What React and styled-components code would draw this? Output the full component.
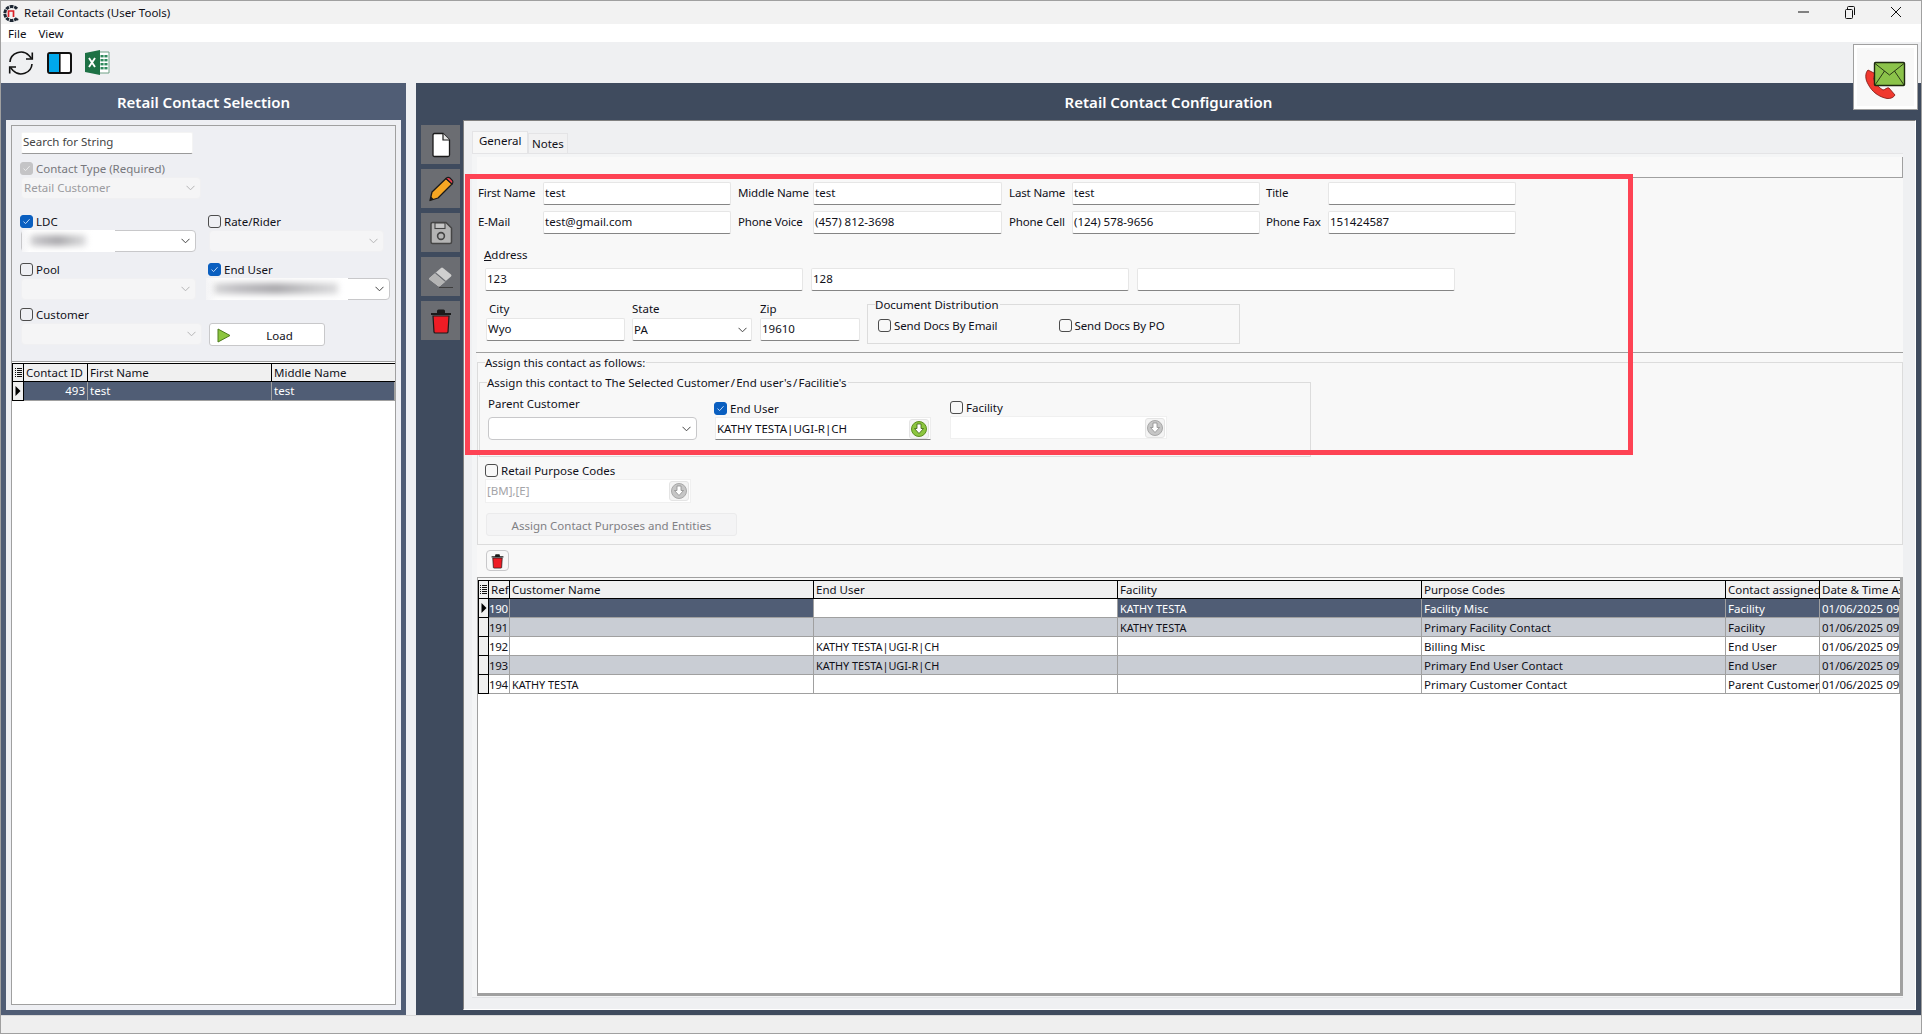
import React from 'react';
import styled, { createGlobalStyle } from 'styled-components';

const Global = createGlobalStyle`
  html, body { margin: 0; padding: 0; background: #eff0f2; }
  * { box-sizing: border-box; }
  #root { width: 1922px; height: 1034px; overflow: hidden; }
`;

const Window = styled.div`
  position: relative; width: 1922px; height: 1034px; display: flex; flex-direction: column;
  border: 1px solid #a0a0a0; background: #eff0f2; color: #101018;
  font: 11.5px/16px "Noto Sans", sans-serif; overflow: hidden;
`;
const TitleBar = styled.div`
  height: 23px; display: flex; align-items: center; padding: 1px 0 0 2px; background: #f2f2f2;
  font-size: 11.5px; gap: 5px;
`;
const TitleText = styled.span` flex: 1; `;
const WinControls = styled.div` display: flex; align-items: center; margin: -2px 19px 0 0; gap: 35px; `;
const MenuBar = styled.div`
  height: 18px; background: #fff; display: flex; align-items: center; gap: 12px; padding: 1px 0 0 7px; font-size: 11.5px;
`;
const Toolbar = styled.div`
  height: 41px; display: flex; align-items: center; padding-left: 7px; gap: 13px;
`;
const Panels = styled.div` flex: 1; display: flex; gap: 10px; min-height: 0; `;
const LeftPanel = styled.section`
  width: 405px; background: #505d75; display: flex; flex-direction: column; padding: 0 5px 5px;
`;
const RightPanel = styled.section`
  flex: 1; background: #3f4b5e; display: flex; flex-direction: column; padding: 0 5px 5px;
`;
const PanelTitle = styled.h2`
  height: 37px; margin: 0; color: #fff; font: 600 15px/39px "Noto Sans", sans-serif; text-align: center; flex: none;
`;
const LeftBody = styled.div`
  flex: 1; background: #eeeff3; padding: 5px; display: flex; min-height: 0;
`;
const LeftBox = styled.div`
  flex: 1; border: 1px solid #a0a0a0; display: flex; flex-direction: column; min-height: 0;
`;
const FilterForm = styled.div`
  height: 235px; padding: 6px 0 0 8px; flex: none;
`;
const Input = styled.div`
  height: ${p => p.$h || 23}px; width: ${p => (p.$w ? p.$w + 'px' : '100%')}; flex: none;
  background: #fff; border: 1px solid #e6e6e6; border-bottom: 1px solid #858585; border-radius: 2px;
  padding: 0 1px; line-height: ${p => (p.$h || 23) - 4}px; white-space: nowrap; overflow: hidden;
`;
const SearchInput = styled(Input)`
  margin-left: 1px; border-color: #f4f4f4; border-bottom-color: #9a9a9a; color: #444;
`;
const StateInput = styled(Input)`
  display: flex; align-items: center; padding-right: 4px;
`;
const CheckRow = styled.label`
  display: flex; align-items: center; gap: 3px; height: 13px; color: ${p => (p.$disabled ? '#77777c' : 'inherit')};
  margin-top: ${p => p.$mt || 0}px; margin-left: ${p => p.$ml || 0}px;
`;
const CheckBox = styled.span`
  width: 13px; height: 13px; border-radius: 3px; flex: none; display: flex; align-items: center; justify-content: center;
  border: 1px solid ${p => (p.$state === 'on' ? '#0a5fc0' : p.$state === 'off-dis' ? '#c4c4c6' : '#4d4d4d')};
  background: ${p => (p.$state === 'on' ? '#0a5fc0' : p.$state === 'off-dis' ? '#c4c4c6' : 'transparent')};
`;
const ComboBox = styled.div`
  position: relative; height: ${p => p.$h || 22}px; width: ${p => p.$w}px; margin-top: ${p => p.$mt ?? 2}px; margin-left: ${p => p.$ml || 0}px;
  background: ${p => (p.$disabled ? '#f5f5f6' : '#fff')}; border: 1px solid ${p => (p.$disabled ? '#f0f0f2' : '#c8c8ca')};
  border-radius: 4px; display: flex; align-items: center; padding: 0 5px 0 2px; color: ${p => (p.$disabled ? '#9b9b9f' : 'inherit')};
`;
const ComboText = styled.span` flex: 1; white-space: nowrap; `;
const ComboMask = styled.span`
  position: absolute; left: ${p => p.$l}px; top: -1px; bottom: -1px; width: ${p => p.$w}px; background: linear-gradient(90deg, #f4f4f6, #fff 8%); overflow: hidden;
`;
const BlurredValue = styled.span`
  position: absolute; left: ${p => p.$l}px; top: 5px; height: 11px; width: ${p => p.$w}px;
  background: linear-gradient(90deg, #d4d4d6, #bdbcc0 20%, #a9a8ac 50%, #c4c4c6 75%, #dcdcde 100%);
  filter: blur(3px);
`;
const FieldsRow = styled.div`
  display: grid; grid-template-columns: 188px 1fr; margin-top: ${p => p.$mt}px;
`;
const Field = styled.div` min-width: 0; `;
const LoadButton = styled.button`
  width: 116px; height: 23px; margin: 15px 0 0 1px; background: #fff; border: 1px solid #c8c8ca; border-radius: 3px;
  display: flex; align-items: center; padding: 2px 0 0 7px; font: inherit; color: inherit;
`;
const LoadLabel = styled.span` flex: 1; text-align: center; padding-left: 4px; `;

const GridWrap = styled.div`
  flex: 1; background: #fff; min-height: 0; display: flex; flex-direction: column;
`;
const LeftGridWrap = styled(GridWrap)` border-top: 1px solid #a0a0a0; padding-top: 1px; `;
const GridRow = styled.div`
  display: grid; grid-template-columns: ${p => p.$cols}; height: 19px; flex: none;
`;
const HeaderCell = styled.div`
  background: #f0f0f0; border-top: 1px solid #000; border-bottom: 1px solid #000; border-right: 1px solid #000;
  padding: 0 0 0 2px; line-height: 17px; white-space: nowrap; overflow: hidden; display: flex; align-items: center;
  &:last-child { border-right: none; }
`;
const RowHead = styled.div`
  background: #f0f0f0; border-bottom: 1px solid #000; border-right: 1px solid #000; border-left: 1px solid #000;
  border-top: ${p => (p.$top ? '1px solid #000' : 'none')};
  display: flex; align-items: center; justify-content: center;
`;
const Cell = styled.div`
  background: ${p => p.$bg}; color: ${p => p.$fg}; text-align: ${p => (p.$right ? 'right' : 'left')};
  border-bottom: 1px solid #a0a0a0; border-right: 1px solid #a0a0a0; padding: 0 ${p => (p.$tight ? 0 : 2)}px;
  line-height: 18px; white-space: nowrap; overflow: hidden;
  font-size: ${p => (p.$caps ? '10.9px' : 'inherit')}; letter-spacing: ${p => (p.$tight ? '-0.3px' : 'normal')};
`;
const RightGridWrap = styled(GridWrap)`
  margin-top: 6px; border-top: 1px solid #a0a0a0; border-left: 1px solid #a0a0a0; border-right: 3px solid #a0a0a0; border-bottom: 3px solid #a0a0a0;
  padding-top: 2px; background: linear-gradient(#f8f8f8 2px, #fff 2px);
  ${Cell} { line-height: 20px; }
`;
const Sidebar = styled.div`
  width: 42px; flex: none; display: flex; flex-direction: column; gap: 5px; padding-top: 5px;
`;
const SideButton = styled.div`
  width: 39px; height: 39px; background: #6b6d72; display: flex; align-items: center; justify-content: center;
`;
const RightBody = styled.div` flex: 1; display: flex; min-height: 0; `;
const Main = styled.div`
  flex: 1; display: flex; flex-direction: column; min-width: 0;
  border: 1px solid; border-color: #808080 #fff #fff #808080; padding: 10px 12px 11px 8px; background: #eff0f2;
`;
const Tabs = styled.div` height: 22px; display: flex; align-items: flex-end; flex: none; `;
const Tab = styled.div`
  height: ${p => (p.$active ? 22 : 20)}px; width: ${p => p.$w}px; padding-left: ${p => (p.$active ? 6 : 3)}px; background: ${p => (p.$active ? '#f7f7f7' : '#f1f1f2')};
  border: 1px solid #e4e4e6; border-bottom: none; line-height: ${p => (p.$active ? 18 : 19)}px;
`;
const TabPage = styled.div`
  flex: 1; min-height: 0; display: flex; flex-direction: column; border-top: 1px solid #e4e4e6; border-bottom: 1px solid #e2e3e6;
  padding: 3px 0 1px 5px; background: #f4f5f6;
`;
const TopStrip = styled.div`
  height: 21px; flex: none; background: #f9f9f9; border-right: 1px solid #a0a0a0; border-bottom: 1px solid #a0a0a0;
`;
const PageBody = styled.div` flex: 1; min-height: 0; display: flex; flex-direction: column; background: #f8f8f8; `;
const ContactGrid = styled.div`
  display: grid; grid-template-columns: 66px 188px 82px 189px 70px 188px 68px 188px; row-gap: 6px; padding-top: 4px; align-items: center;
`;
const FormLabel = styled.span`
  padding-left: ${p => p.$pl || 0}px; margin-bottom: 2px; white-space: nowrap; letter-spacing: -0.15px;
`;
const AddressLabel = styled.div` margin: 13px 0 0 7px; height: 16px; `;
const Under = styled.u` text-decoration-thickness: 1px; `;
const AddressRow = styled.div` display: flex; gap: 8px; margin: 5px 0 0 8px; `;
const CityRow = styled.div` display: flex; margin: 10px 0 0 9px; align-items: flex-start; `;
const StackField = styled.div`
  width: ${p => p.$w}px; margin-left: ${p => p.$ml || 0}px; flex: none;
`;
const StackLabel = styled.div` height: 17px; padding-left: ${p => p.$pl || 0}px; `;
const GroupBox = styled.div`
  position: relative; border: 1px solid #dcdcdc; flex: none;
  width: ${p => (p.$w ? p.$w + 'px' : 'auto')}; height: ${p => p.$h}px;
  margin: ${p => p.$m || 0};
`;
const Legend = styled.span`
  position: absolute; left: ${p => p.$l || 7}px; top: -8px; background: #f8f8f8; line-height: 15px; white-space: nowrap; padding-right: 1px;
`;
const DocChecks = styled.div` display: flex; padding: 14px 0 0 10px; letter-spacing: -0.1px; `;
const DocCheck = styled.div` width: 181px; `;
const Separator = styled.div` height: 1px; background: #a0a0a0; margin-top: 8px; flex: none; margin-left: -1px; `;
const AssignColumns = styled.div`
  display: flex; align-items: flex-end; padding: 0 0 16px 8px; height: 100%;
`;
const AssignCol = styled.div`
  width: ${p => p.$w}px; margin-left: ${p => p.$ml || 0}px; margin-bottom: ${p => p.$mb || 0}px; flex: none;
`;
const ParentLabel = styled.div` height: 16px; margin-bottom: 5px; `;
const PickerInput = styled.div`
  height: ${p => p.$h || 23}px; width: ${p => p.$w}px; display: flex; align-items: center; background: #fff; margin-top: ${p => p.$mt ?? 2}px; margin-left: ${p => p.$ml || 0}px;
  border: 1px solid ${p => (p.$on ? '#ededed' : '#f0f0f0')}; border-bottom-color: ${p => (p.$on ? '#858585' : '#f0f0f0')};
  padding: 0 1px 0 1px; color: ${p => (p.$on ? 'inherit' : '#a4a4a8')};
`;
const PickerText = styled.span` flex: 1; white-space: nowrap; `;
const PickerBtn = styled.span`
  width: 20px; height: 20px; display: flex; align-items: center; justify-content: center; border: 1px solid #e4e4e4; border-radius: 3px; background: #f4f4f4; flex: none;
`;
const AssignButton = styled.div`
  width: 251px; height: 23px; margin: 10px 0 0 8px; background: #f4f4f5; border: 1px solid #ebebec; border-radius: 3px; color: #808084; text-align: center; line-height: 23px;
`;
const DeleteBtn = styled.div`
  width: 23px; height: 21px; margin: 5px 0 0 9px; flex: none; border: 1px solid #c8c8ca; border-radius: 4px; background: #f8f8f8;
  display: flex; align-items: center; justify-content: center;
`;
const StatusBar = styled.div` height: 18px; flex: none; background: #efefef; border-top: 1px solid #d8d8d8; `;
const PhoneBox = styled.div`
  position: absolute; left: 1852px; top: 43px; width: 65px; height: 66px; background: #f8f8f8; border: 1px solid #a0a0a0;
  box-shadow: inset 0 0 0 3px #fff; display: flex; align-items: center; justify-content: center; z-index: 3;
`;
const Highlight = styled.div`
  position: absolute; left: 464px; top: 173px; width: 1168px; height: 281px; border: 5px solid #fe4354; z-index: 2; pointer-events: none;
`;

const Check = ({ state }) => (
  <CheckBox $state={state}>
    {(state === 'on' || state === 'off-dis') && (
      <svg width="9" height="9" viewBox="0 0 9 9"><path d="M1.5 4.6 L3.6 6.6 L7.6 2.2" fill="none" stroke={state === 'on' ? '#cfe2fb' : '#eee'} strokeWidth="0.9" /></svg>
    )}
  </CheckBox>
);
const Chevron = ({ c = '#444' }) => (
  <svg width="9" height="6" viewBox="0 0 9 6"><path d="M0.5 0.8 L4.5 4.8 L8.5 0.8" fill="none" stroke={c} strokeWidth="1" /></svg>
);
const ArrowCircle = ({ on }) => (
  <svg width="16" height="16" viewBox="0 0 16 16">
    <circle cx="8" cy="8" r="7.5" fill={on ? '#8cc63f' : '#c6c6c6'} stroke={on ? '#5d8f1e' : '#a8a8a8'} />
    <path d="M6 3 H10 V7.5 H12.5 L8 12.5 L3.5 7.5 H6 Z" fill="#fff" stroke={on ? '#3c5f12' : '#8d8d8d'} strokeWidth="0.8" />
  </svg>
);
const GridMenuIcon = () => (
  <svg width="7" height="11" viewBox="0 0 7 11">
    {[1, 3, 5, 7, 9].map(y => (
      <g key={y}><rect x="0" y={y} width="1" height="1" fill="#111" /><rect x="2" y={y} width="5" height="1" fill="#111" /></g>
    ))}
  </svg>
);
const RowArrow = () => <svg width="6" height="10" viewBox="0 0 6 10"><path d="M0.5 0 L5.5 5 L0.5 10 Z" fill="#000" /></svg>;
const TrashIcon = ({ w = 22, h = 26 }) => (
  <svg width={w} height={h} viewBox="0 0 22 26">
    <path d="M1 5 H21 V7 H1 Z M7 5 V3 Q7 1.5 8.5 1.5 H13.5 Q15 1.5 15 3 V5 Z" fill="#1a1a1a" />
    <path d="M3 8 H19 L18 24 Q18 25 16.5 25 H5.5 Q4 25 4 24 Z" fill="#ee1c25" stroke="#1a1a1a" strokeWidth="1.2" />
  </svg>
);

const Logo = () => (
  <svg width="16" height="17" viewBox="0 0 16 17">
    <path d="M14 3.8 A7 7 0 1 0 14 13.2" fill="none" stroke="#1d2733" strokeWidth="3" strokeDasharray="3.4 0.8" />
    <path d="M5.5 12 V6 H10.5 V12" fill="none" stroke="#d92027" strokeWidth="1.7" />
    <circle cx="14.5" cy="14.5" r="1" fill="#1d2733" />
  </svg>
);
const RefreshIcon = () => (
  <svg width="26" height="26" viewBox="0 0 26 26" fill="none" stroke="#111" strokeWidth="1.6">
    <path d="M2 12 A11 10.5 0 0 1 21 5.5 L23.5 8.5" />
    <path d="M24.3 2.5 V9 H18" />
    <path d="M24 14 A11 10.5 0 0 1 5 20.5 L2.5 17.5" />
    <path d="M1.7 23.5 V17 H8" />
  </svg>
);
const PanelIcon = () => (
  <svg width="25" height="22" viewBox="0 0 25 22">
    <rect x="1" y="1" width="23" height="20" rx="2" fill="#fff" stroke="#111" strokeWidth="2" />
    <rect x="2" y="2" width="10" height="18" fill="#00a8ec" />
    <rect x="12" y="1" width="1.6" height="20" fill="#111" />
  </svg>
);
const ExcelIcon = () => (
  <svg width="25" height="25" viewBox="0 0 25 25">
    <path d="M14 2 H24 V23 H14 Z" fill="#fff" stroke="#6fa186" strokeWidth="1" />
    {[5, 9, 13, 17].map(y => <rect key={y} x="15.5" y={y} width="7" height="2.4" fill="#2f8a5c" />)}
    <rect x="18.6" y="4" width=".8" height="17" fill="#fff" />
    <path d="M0 3 L15 0 V25 L0 22 Z" fill="#1d7145" />
    <path d="M4 8 L10 17 M10 8 L4 17" stroke="#fff" strokeWidth="1.9" />
  </svg>
);
const PhoneMailIcon = () => (
  <svg width="42" height="44" viewBox="0 0 42 44">
    <path d="M3 15 C0 18 0 24 3 29 C7 37 14 42 22 43.5 C26 44 29 42 30 40 L24 33 C22 32 20 35 18 35 C14 33 10 28 8.5 24 C8 22 10 21 11 19 Z" fill="#f0392f" stroke="#7a1410" strokeWidth=".8" />
    <rect x="9.5" y="7.5" width="30" height="23" rx="1" fill="#8bc34a" stroke="#1e2a10" strokeWidth="1.4" />
    <path d="M10 8.5 L24.5 20 L39 8.5 M10 30 L19.5 16 M39 30 L29.5 16" fill="none" stroke="#1e2a10" strokeWidth=".9" />
  </svg>
);
const NewDocIcon = () => (
  <svg width="20" height="26" viewBox="0 0 20 26">
    <path d="M2 3 Q2 1.5 3.5 1.5 H12 L18.5 8 V23 Q18.5 24.5 17 24.5 H3.5 Q2 24.5 2 23 Z" fill="#fff" stroke="#1a1a1a" strokeWidth="1.3" />
    <path d="M12 1.5 V8 H18.5" fill="#e8e8e8" stroke="#1a1a1a" strokeWidth="1.2" />
  </svg>
);
const PencilIcon = () => (
  <svg width="26" height="26" viewBox="0 0 26 26">
    <path d="M2 24.5 L4 16 L18 2.5 L24 8 L10 22 Z" fill="#f5a623" stroke="#1a1a1a" strokeWidth="1.3" strokeLinejoin="round" />
    <path d="M18 2.5 Q20 0.5 22 2 L24.5 4.5 Q25.5 6.5 24 8 Z" fill="#f04050" stroke="#1a1a1a" strokeWidth="1.1" />
    <path d="M2 24.5 L3 20.5 L6 23.5 Z" fill="#1a1a1a" />
  </svg>
);
const SaveIcon = () => (
  <svg width="24" height="24" viewBox="0 0 24 24">
    <path d="M2 3 Q2 1.5 3.5 1.5 H17 L22.5 7 V21 Q22.5 22.5 21 22.5 H3.5 Q2 22.5 2 21 Z" fill="#b4b4b4" stroke="#454545" strokeWidth="1.5" />
    <rect x="6" y="2" width="10" height="5.5" fill="#c6c6c6" stroke="#454545" strokeWidth="1.1" />
    <circle cx="12" cy="15" r="3.4" fill="none" stroke="#454545" strokeWidth="1.6" />
  </svg>
);
const EraserIcon = () => (
  <svg width="26" height="24" viewBox="0 0 26 24">
    <path d="M1.5 13 L13 3 Q14 2 15 3 L23 9.5 Q24 10.5 23 11.5 L12 21 Q11 21.8 10 21 L1.5 14.5 Q0.8 13.8 1.5 13 Z" fill="#cfcfcf" />
    <path d="M7 8.5 L17 17 L18 16 L8 7.6 Z" fill="#6b6d72" />
    <path d="M1.5 13 L7 8.5 L17 17 L12 21 Q11 21.8 10 21 L1.5 14.5 Q0.8 13.8 1.5 13 Z" fill="#b4b4b4" />
    <path d="M11 22.5 H25" stroke="#3e3e3e" strokeWidth="1" />
  </svg>
);
const WinMin = () => <svg width="11" height="2" viewBox="0 0 11 2"><rect width="11" height="1" y=".5" fill="#111" /></svg>;
const WinRestore = () => (
  <svg width="11" height="13" viewBox="0 0 11 13" fill="none" stroke="#111"><rect x="1.5" y="3.5" width="7" height="9" rx="1" /><path d="M3.5 3 V1.5 Q3.5 .5 4.5 .5 H9.5 Q10.5 .5 10.5 1.5 V9" /></svg>
);
const WinClose = () => <svg width="12" height="12" viewBox="0 0 12 12"><path d="M1 1 L11 11 M11 1 L1 11" stroke="#111" strokeWidth="1" /></svg>;
const LoadArrow = () => <svg width="14" height="15" viewBox="0 0 14 15"><path d="M1 1 L13 7.5 L1 14 Z" fill="#8cc63f" stroke="#4d7a1c" /></svg>;

const leftCols = '12px 64px 184px 1fr';
const rightCols = '11px 21px 304px 304px 304px 304px 94px 1fr';
const rightHeads = ['Ref', 'Customer Name', 'End User', 'Facility', 'Purpose Codes', 'Contact assigned', 'Date & Time Assigned'];
const DATE = '01/06/2025 09:';
const PATH = 'KATHY TESTA|UGI-R|CH';
const rightRows = [
  { cells: ['190', '', '', 'KATHY TESTA', 'Facility Misc', 'Facility', DATE], mode: 'selected' },
  { cells: ['191', '', '', 'KATHY TESTA', 'Primary Facility Contact', 'Facility', DATE], mode: 'alt' },
  { cells: ['192', '', PATH, '', 'Billing Misc', 'End User', DATE], mode: 'plain' },
  { cells: ['193', '', PATH, '', 'Primary End User Contact', 'End User', DATE], mode: 'alt' },
  { cells: ['194', 'KATHY TESTA', '', '', 'Primary Customer Contact', 'Parent Customer', DATE], mode: 'plain' },
];
const palette = {
  selected: ['#505d75', '#fff'],
  alt: ['#c9cdd4', '#101018'],
  plain: ['#fff', '#101018'],
};

const CheckField = ({ state, label, disabled, mt, ml }) => (
  <CheckRow $disabled={disabled} $mt={mt} $ml={ml}><Check state={state} />{label}</CheckRow>
);

export default function App() {
  return (
    <Window>
      <Global />
      <TitleBar>
        <Logo />
        <TitleText>Retail Contacts (User Tools)</TitleText>
        <WinControls><WinMin /><WinRestore /><WinClose /></WinControls>
      </TitleBar>
      <MenuBar><span>File</span><span>View</span></MenuBar>
      <Toolbar><RefreshIcon /><PanelIcon /><ExcelIcon /></Toolbar>
      <Panels>
        <LeftPanel>
          <PanelTitle>Retail Contact Selection</PanelTitle>
          <LeftBody>
            <LeftBox>
              <FilterForm>
                <SearchInput $w={172} $h={22}>Search for String</SearchInput>
                <CheckField state="off-dis" label="Contact Type (Required)" disabled mt={8} />
                <ComboBox $w={180} $ml={1} $disabled>
                  <ComboText>Retail Customer</ComboText><Chevron c="#b4b4b6" />
                </ComboBox>
                <FieldsRow $mt={16}>
                  <Field>
                    <CheckField state="on" label="LDC" />
                    <ComboBox $w={175} $ml={1}>
                      <ComboMask $l={0} $w={93}><BlurredValue $l={8} $w={56} /></ComboMask>
                      <ComboText /><Chevron />
                    </ComboBox>
                  </Field>
                  <Field>
                    <CheckField state="off" label="Rate/Rider" />
                    <ComboBox $w={175} $ml={1} $disabled><ComboText /><Chevron c="#b4b4b6" /></ComboBox>
                  </Field>
                </FieldsRow>
                <FieldsRow $mt={11}>
                  <Field>
                    <CheckField state="off" label="Pool" />
                    <ComboBox $w={175} $ml={1} $disabled><ComboText /><Chevron c="#b4b4b6" /></ComboBox>
                  </Field>
                  <Field>
                    <CheckField state="on" label="End User" />
                    <ComboBox $w={181} $ml={1}>
                      <ComboMask $l={-4} $w={142}><BlurredValue $l={8} $w={124} /></ComboMask>
                      <ComboText /><Chevron />
                    </ComboBox>
                  </Field>
                </FieldsRow>
                <FieldsRow $mt={8}>
                  <Field>
                    <CheckField state="off" label="Customer" />
                    <ComboBox $w={181} $ml={1} $disabled><ComboText /><Chevron c="#b4b4b6" /></ComboBox>
                  </Field>
                  <Field>
                    <LoadButton><LoadArrow /><LoadLabel>Load</LoadLabel></LoadButton>
                  </Field>
                </FieldsRow>
              </FilterForm>
              <LeftGridWrap>
                <GridRow $cols={leftCols}>
                  <RowHead $top><GridMenuIcon /></RowHead>
                  <HeaderCell>Contact ID</HeaderCell>
                  <HeaderCell>First Name</HeaderCell>
                  <HeaderCell>Middle Name</HeaderCell>
                </GridRow>
                <GridRow $cols={leftCols}>
                  <RowHead><RowArrow /></RowHead>
                  <Cell $bg="#505d75" $fg="#fff" $right>493</Cell>
                  <Cell $bg="#505d75" $fg="#fff">test</Cell>
                  <Cell $bg="#505d75" $fg="#fff">test</Cell>
                </GridRow>
              </LeftGridWrap>
            </LeftBox>
          </LeftBody>
        </LeftPanel>
        <RightPanel>
          <PanelTitle>Retail Contact Configuration</PanelTitle>
          <RightBody>
            <Sidebar>
              <SideButton><NewDocIcon /></SideButton>
              <SideButton><PencilIcon /></SideButton>
              <SideButton><SaveIcon /></SideButton>
              <SideButton><EraserIcon /></SideButton>
              <SideButton><TrashIcon /></SideButton>
            </Sidebar>
            <Main>
              <Tabs><Tab $active $w={56}>General</Tab><Tab $w={40}>Notes</Tab></Tabs>
              <TabPage>
                <TopStrip />
                <PageBody>
                  <ContactGrid>
                    <FormLabel $pl={1}>First Name</FormLabel><Input>test</Input>
                    <FormLabel $pl={7}>Middle Name</FormLabel><Input>test</Input>
                    <FormLabel $pl={7}>Last Name</FormLabel><Input>test</Input>
                    <FormLabel $pl={6}>Title</FormLabel><Input />
                    <FormLabel $pl={1}>E-Mail</FormLabel><Input>test@gmail.com</Input>
                    <FormLabel $pl={7}>Phone Voice</FormLabel><Input>(457) 812-3698</Input>
                    <FormLabel $pl={7}>Phone Cell</FormLabel><Input>(124) 578-9656</Input>
                    <FormLabel $pl={6}>Phone Fax</FormLabel><Input>151424587</Input>
                  </ContactGrid>
                  <AddressLabel><Under>A</Under>ddress</AddressLabel>
                  <AddressRow>
                    <Input $w={318}>123</Input>
                    <Input $w={318}>128</Input>
                    <Input $w={318} />
                  </AddressRow>
                  <CityRow>
                    <StackField $w={139}><StackLabel $pl={3}>City</StackLabel><Input>Wyo</Input></StackField>
                    <StackField $w={120} $ml={7}>
                      <StackLabel>State</StackLabel>
                      <StateInput><ComboText>PA</ComboText><Chevron /></StateInput>
                    </StackField>
                    <StackField $w={100} $ml={8}><StackLabel>Zip</StackLabel><Input>19610</Input></StackField>
                    <GroupBox $w={373} $h={40} $m="3px 0 0 7px">
                      <Legend>Document Distribution</Legend>
                      <DocChecks>
                        <DocCheck><CheckField state="off" label="Send Docs By Email" /></DocCheck>
                        <DocCheck><CheckField state="off" label="Send Docs By PO" /></DocCheck>
                      </DocChecks>
                    </GroupBox>
                  </CityRow>
                  <Separator />
                  <GroupBox $h={183} $m="9px 0 0 0">
                    <Legend>Assign this contact as follows:</Legend>
                    <GroupBox $w={832} $h={75} $m="19px 0 0 1px">
                      <Legend>Assign this contact to The Selected Customer{'\u200a'}/{'\u200a'}End user's{'\u200a'}/{'\u200a'}Facilitie's</Legend>
                      <AssignColumns>
                        <AssignCol $w={209}>
                          <ParentLabel>Parent Customer</ParentLabel>
                          <ComboBox $w={209} $h={23} $mt={0}><ComboText /><Chevron /></ComboBox>
                        </AssignCol>
                        <AssignCol $w={216} $ml={17}>
                          <CheckField state="on" label="End User" />
                          <PickerInput $w={216} $ml={1} $on>
                            <PickerText>KATHY TESTA|UGI-R|CH</PickerText>
                            <PickerBtn><ArrowCircle on /></PickerBtn>
                          </PickerInput>
                        </AssignCol>
                        <AssignCol $w={217} $ml={20} $mb={1}>
                          <CheckField state="off" label="Facility" />
                          <PickerInput $w={217}>
                            <PickerText /><PickerBtn><ArrowCircle /></PickerBtn>
                          </PickerInput>
                        </AssignCol>
                      </AssignColumns>
                    </GroupBox>
                    <CheckField state="off" label="Retail Purpose Codes" mt={7} ml={7} />
                    <PickerInput $w={206} $h={24} $mt={2} $ml={7}>
                      <PickerText>[BM],[E]</PickerText><PickerBtn><ArrowCircle /></PickerBtn>
                    </PickerInput>
                    <AssignButton>Assign Contact Purposes and Entities</AssignButton>
                  </GroupBox>
                  <DeleteBtn><TrashIcon w={13} h={16} /></DeleteBtn>
                  <RightGridWrap>
                    <GridRow $cols={rightCols}>
                      <RowHead $top><GridMenuIcon /></RowHead>
                      {rightHeads.map(h => <HeaderCell key={h}>{h}</HeaderCell>)}
                    </GridRow>
                    {rightRows.map(r => (
                      <GridRow $cols={rightCols} key={r.cells[0]}>
                        <RowHead>{r.mode === 'selected' && <RowArrow />}</RowHead>
                        {r.cells.map((c, i) => {
                          const current = r.mode === 'selected' && i === 2;
                          const [bg, fg] = palette[current ? 'plain' : r.mode];
                          return <Cell key={i} $bg={bg} $fg={fg} $tight={i === 0} $caps={c.startsWith('KATHY')}>{c}</Cell>;
                        })}
                      </GridRow>
                    ))}
                  </RightGridWrap>
                </PageBody>
              </TabPage>
            </Main>
          </RightBody>
        </RightPanel>
      </Panels>
      <StatusBar />
      <PhoneBox><PhoneMailIcon /></PhoneBox>
      <Highlight />
    </Window>
  );
}
